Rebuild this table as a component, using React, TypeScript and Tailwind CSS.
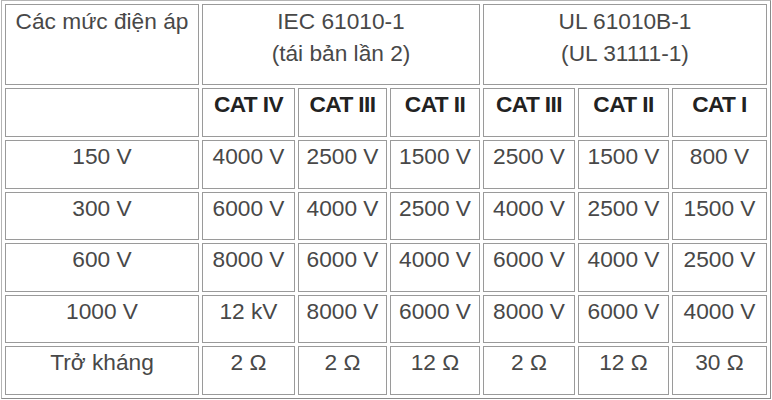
import { Fragment } from "react"

const rows: { label: string; values: string[] }[] = [
  { label: "150 V", values: ["4000 V", "2500 V", "1500 V", "2500 V", "1500 V", "800 V"] },
  { label: "300 V", values: ["6000 V", "4000 V", "2500 V", "4000 V", "2500 V", "1500 V"] },
  { label: "600 V", values: ["8000 V", "6000 V", "4000 V", "6000 V", "4000 V", "2500 V"] },
  { label: "1000 V", values: ["12 kV", "8000 V", "6000 V", "8000 V", "6000 V", "4000 V"] },
  { label: "Trở kháng", values: ["2 Ω", "2 Ω", "12 Ω", "2 Ω", "12 Ω", "30 Ω"] },
]

const cats = ["CAT IV", "CAT III", "CAT II", "CAT III", "CAT II", "CAT I"]

const cell = "border border-[#9a9a9a] text-center"

export default function App() {
  return (
    <div className="h-[400px] w-[772px] bg-white font-['Liberation_Sans',Arial,sans-serif] text-[22.7px] text-[#484848]">
      <div className="ml-px grid w-[770px] grid-cols-[194px_93px_89px_90px_92px_91px_95px] grid-rows-[81px_49px_49px_48px_49px_48px_49px] gap-[3px] border border-t-[#b5b5b5] border-l-[#b5b5b5] border-b-[#8a8a8a] border-r-[#8a8a8a] p-[3px]">
        {/* header */}
        <div className={`${cell} leading-[32px]`}>Các mức điện áp</div>
        <div className={`${cell} col-span-3 leading-[32px]`}>
          IEC 61010-1
          <br />
          (tái bản lần 2)
        </div>
        <div className={`${cell} col-span-3 leading-[32px]`}>
          UL 61010B-1
          <br />
          (UL 31111-1)
        </div>

        {/* categories */}
        <div className={cell} />
        {cats.map((c, i) => (
          <div key={i} className={`${cell} font-bold leading-[31px] tracking-[-0.6px] text-[#222]`}>
            {c}
          </div>
        ))}

        {/* values */}
        {rows.map((r) => (
          <Fragment key={r.label}>
            <div className={`${cell} leading-[31px]`}>{r.label}</div>
            {r.values.map((v, i) => (
              <div key={i} className={`${cell} leading-[31px]`}>
                {v}
              </div>
            ))}
          </Fragment>
        ))}
      </div>
    </div>
  )
}
